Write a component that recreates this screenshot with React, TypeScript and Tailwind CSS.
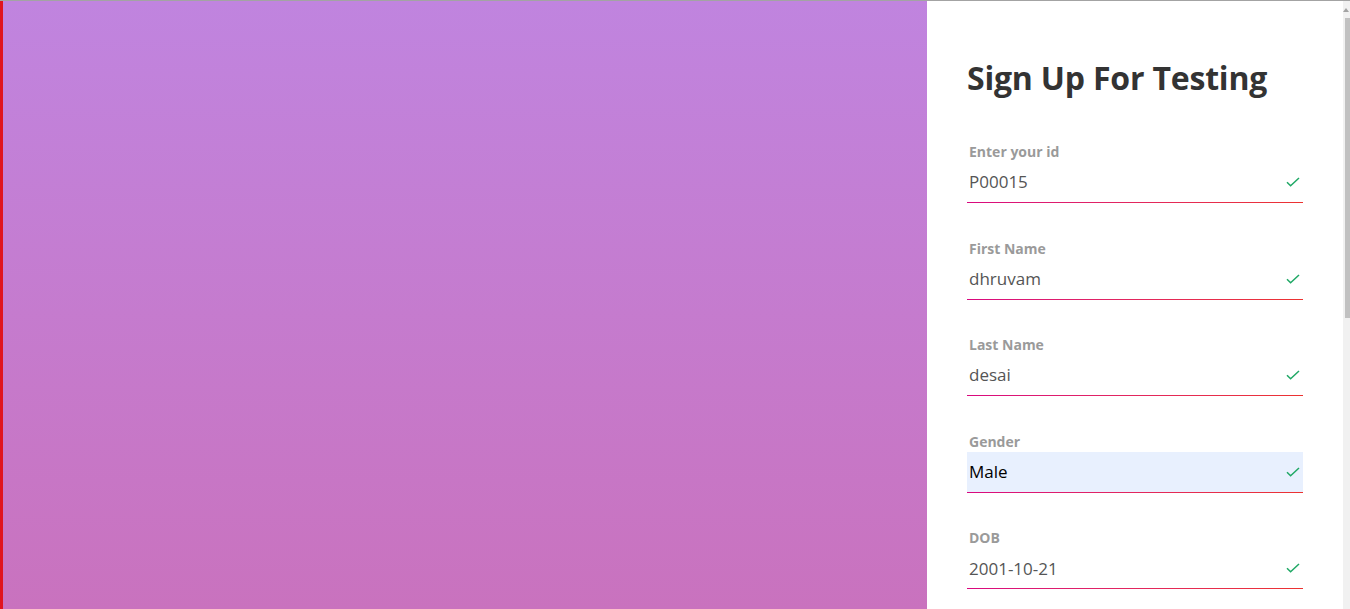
import React from 'react';

const fields = [
  { label: 'Enter your id', value: 'P00015' },
  { label: 'First Name', value: 'dhruvam' },
  { label: 'Last Name', value: 'desai' },
  { label: 'Gender', value: 'Male', autofill: true },
  { label: 'DOB', value: '2001-10-21' },
];

function Check() {
  return (
    <svg width="14" height="10" viewBox="0 0 14 10" fill="none">
      <path d="M1 5.2l3.6 3.6L13 1" stroke="#1fa865" strokeWidth="1.5" />
    </svg>
  );
}

function Field({ label, value, autofill }: { label: string; value: string; autofill?: boolean }) {
  return (
    <div className="mb-[35.6px]">
      <div className="h-5 leading-5 pl-[2px] text-[14px] font-bold text-[#9a9a9a]">{label}</div>
      <div
        className={`h-10 flex items-center justify-between pl-[2px] pr-[3px] text-[17px] ${
          autofill ? 'bg-[#e8f0fe] text-black' : 'text-[#555]'
        }`}
      >
        <span>{value}</span>
        <Check />
      </div>
      <div className="h-px bg-gradient-to-r from-[#d9077f] to-[#ec3330]" />
    </div>
  );
}

export default function App() {
  return (
    <div
      className="h-[609px] w-full flex overflow-hidden border-t border-[#a3a3a3]"
      style={{ fontFamily: '"Open Sans", "Liberation Sans", sans-serif' }}
    >
      <div className="w-[927px] shrink-0 border-l-[3px] border-[#e0141e] bg-gradient-to-b from-[#c084df] to-[#c972be]" />
      <div className="w-[416px] shrink-0 bg-white px-10 pt-[57px]">
        <h1 className="text-[32px] leading-10 font-bold text-[#333] tracking-[-0.2px] mb-[44px]">
          Sign Up For Testing
        </h1>
        {fields.map((f) => (
          <Field key={f.label} {...f} />
        ))}
      </div>
      <div className="w-[7px] shrink-0 bg-[#f1f1f1] flex flex-col">
        <div className="h-[17px] flex items-center justify-end pr-[1px]">
          <div className="w-0 h-0 border-l-[3px] border-r-[3px] border-b-[4px] border-l-transparent border-r-transparent border-b-[#a3a3a3]" />
        </div>
        <div className="ml-[2px] h-[300px] bg-[#c1c1c1]" />
      </div>
    </div>
  );
}
